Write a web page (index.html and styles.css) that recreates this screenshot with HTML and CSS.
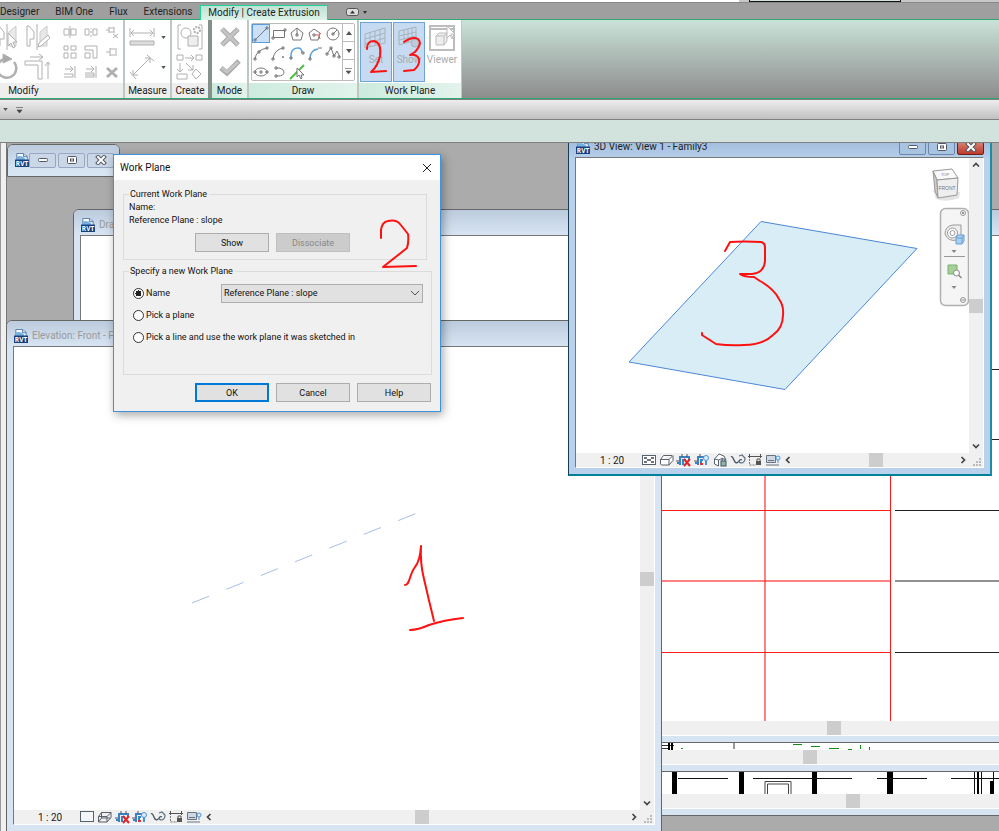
FILE: index.html
```html
<!DOCTYPE html>
<html lang="en">
<head>
<meta charset="utf-8">
<title>Modify | Create Extrusion</title>
<link rel="stylesheet" href="styles.css">
</head>
<body>
<svg class="defs" aria-hidden="true">
  <defs>
    <symbol id="rvt" viewBox="0 0 15 15"><path d="M2 .5h7l4 3V8H2z" fill="#fff" stroke="#4f78ad"/><path d="M9 .5V4h4" fill="#c7daf0" stroke="#4f78ad"/><path d="M2 4q4-2 9 2v3H2z" fill="#74b0e2"/><rect y="7" width="15" height="8" fill="#16417c"/><text x="7.500" y="13.500" text-anchor="middle" font-family="Open Sans, sans-serif" font-size="7" font-weight="700" fill="#fff">RVT</text></symbol>
    <symbol id="min" viewBox="0 0 12 10"><rect x="1.500" y="3.500" width="9" height="3" rx="1" fill="#fff" stroke="#505866"/></symbol>
    <symbol id="max" viewBox="0 0 12 10"><rect x="1.500" y="1.500" width="9" height="7" rx="1" fill="#fff" stroke="#505866"/><rect x="4.500" y="4" width="3" height="2" fill="#fff" stroke="#505866"/></symbol>
    <symbol id="cls" viewBox="0 0 12 10"><path d="M3 2l6 6M9 2L3 8" stroke="#505866" stroke-width="4" stroke-linecap="square"/><path d="M3 2l6 6M9 2L3 8" stroke="#fff" stroke-width="2" stroke-linecap="square"/></symbol>
    <symbol id="up" viewBox="0 0 8 8"><path d="M1 5.500L4 2.500l3 3" fill="none" stroke="#444" stroke-width="1.700"/></symbol>
    <symbol id="down" viewBox="0 0 8 8"><path d="M1 2.500l3 3 3-3" fill="none" stroke="#444" stroke-width="1.700"/></symbol>
    <symbol id="left" viewBox="0 0 8 8"><path d="M5.500 1l-3 3 3 3" fill="none" stroke="#444" stroke-width="1.700"/></symbol>
    <symbol id="right" viewBox="0 0 8 8"><path d="M2.500 1l3 3-3 3" fill="none" stroke="#444" stroke-width="1.700"/></symbol>
    <symbol id="grip" viewBox="0 0 8 8"><path d="M6 0h2v2H6zM3 3h2v2H3zM6 3h2v2H6zM0 6h2v2H0zM3 6h2v2H3zM6 6h2v2H6z" fill="#bbb"/></symbol>
    <symbol id="tri" viewBox="0 0 6 4"><path d="M0 0h6L3 4z" fill="#555"/></symbol>
    <symbol id="triup" viewBox="0 0 6 4"><path d="M0 4h6L3 0z" fill="#555"/></symbol>
    <symbol id="detail" viewBox="0 0 16 14"><rect x="1.500" y="2.500" width="13" height="9" fill="#fff" stroke="#59616b"/><path d="M3 4h3v2H3zM10 4h3v2h-3zM6 6h4v2H6zM3 8h3v2H3zM10 8h3v2h-3z" fill="#6d7680"/></symbol>
    <symbol id="sheet" viewBox="0 0 16 14"><rect x="1.500" y="1.500" width="13" height="10" fill="#f3f6fb" stroke="#59616b"/></symbol>
    <symbol id="box" viewBox="0 0 16 14"><path d="M1.500 6.500l3-4h8.500l1 1v4l-4 4.500H2.500l-1-1zM1.500 6.500H10l4-4M10 6.500V12" fill="#fff" stroke="#59616b" stroke-linejoin="round"/></symbol>
    <symbol id="boxw" viewBox="0 0 16 14"><path d="M1.500 6.500l3-4h9.500v5L10 12H1.500zM1.500 6.500H10l4-4M10 6.500V12M4.500 2.500V8h9M4.500 8l-3 4" fill="none" stroke="#59616b" stroke-linejoin="round"/></symbol>
    <symbol id="sunx" viewBox="0 0 16 14"><path d="M1 10h4M4 12V4h9v3M7 12V7h3" fill="none" stroke="#3b82c4" stroke-width="2"/><path d="M0 8h3M6 1v3M11 1v3" stroke="#555"/><path d="M8 6l6 7M14 6l-6 7" stroke="#dd2727" stroke-width="2"/></symbol>
    <symbol id="suno" viewBox="0 0 16 14"><path d="M1 10h4M4 12V4h6M7 12V7h2" fill="none" stroke="#3b82c4" stroke-width="2"/><path d="M0 8h3M6 1v3" stroke="#555"/><path d="M6 11h3" stroke="#d33" stroke-width="2"/><circle cx="12" cy="5" r="2.500" fill="#def" stroke="#4c91d6"/><path d="M12 8v4" stroke="#4c91d6" stroke-width="2"/></symbol>
    <symbol id="lock3d" viewBox="0 0 16 14"><path d="M2.500 6L7 1l5 2 2 4M2.500 6v5l4 2V7zM6.500 7L11 5" fill="#fff" stroke="#59616b"/><rect x="9" y="8" width="5" height="5" fill="#8fb6a4" stroke="#456"/><path d="M10 8V6h3v2" fill="none" stroke="#456"/></symbol>
    <symbol id="glasses" viewBox="0 0 16 14"><path d="M1 4q1-1 2 1l2 4q2 2 4-1 1-2 3-1" fill="none" stroke="#44505c" stroke-width="1.300"/><path d="M9 3l3-1 3 3q0 4-3 5-3 0-3-2" fill="none" stroke="#5c7386" stroke-width="1.200"/></symbol>
    <symbol id="crop" viewBox="0 0 16 14"><path d="M1 3.500h14M2.500 1v4M13.500 1v4" stroke="#555"/><path d="M2.500 6v6H9" fill="none" stroke="#777" stroke-dasharray="2 1"/><rect x="9" y="8" width="5" height="4" fill="#555"/><path d="M10 8V6h3v2" fill="none" stroke="#555"/></symbol>
    <symbol id="panel" viewBox="0 0 16 14"><path d="M1.500 2.500h9v7h-9z" fill="#cfd8e2" stroke="#667482"/><path d="M1 12h13M3 7.500h6" stroke="#667482"/><circle cx="13" cy="5" r="2" fill="#dff0ff" stroke="#4c91d6"/><path d="M13 7v3" stroke="#4c91d6"/></symbol>
  </defs>
</svg>

<div class="titlebar"><span class="searchbox"></span></div>

<nav class="tabs">
  <a class="tab first" href="#">Designer</a>
  <a class="tab" href="#">BIM One</a>
  <a class="tab" href="#">Flux</a>
  <a class="tab" href="#">Extensions</a>
  <a class="tab active" href="#">Modify | Create Extrusion</a>
  <button class="collapse" aria-label="Minimize ribbon"><svg width="22" height="10" viewBox="0 0 22 10"><rect x=".5" y="1.500" width="12" height="7" rx="2" fill="#ddd" stroke="#555"/><path d="M4 6.500L6.500 3.500 9 6.500zM17 4h4l-2 3z" fill="#333"/></svg></button>
</nav>

<header class="ribbon">
  <section class="panel modify">
    <div class="body">
      <div class="big">
        <button aria-label="Mirror, pick axis"><svg width="26" height="28" viewBox="0 0 26 28" class="ln"><path d="M3 3v20h3v-7h4V9L5 3zM13 1v26" /><path d="M15 9l7-6v20h-7z" fill="#e8e8e8" stroke="#ccc"/><path d="M14 10v13l3-3 2 5 2-1-2-5h4z" fill="#fff"/></svg></button>
        <button aria-label="Mirror, draw axis"><svg width="26" height="28" viewBox="0 0 26 28" class="ln"><path d="M3 3v20h3v-7h4V9L5 3zM13 1v26"/><path d="M16 9l7-6v20h-7z" fill="#e8e8e8" stroke="#ccc"/><path d="M14 24l1-4 9-8 2 3-9 8z" fill="#fff"/></svg></button>
        <button aria-label="Rotate"><svg width="26" height="28" viewBox="0 0 26 28" class="ln"><path d="M9 6.500A9.500 9.500 0 1 0 20 9" stroke-width="2.500"/><path d="M9 1l9 5-9 4z" fill="#aaa"/></svg></button>
        <button aria-label="Trim"><svg width="26" height="28" viewBox="0 0 26 28" class="ln"><path d="M1 8h17v18h-4V12H1zM6 4h12M15 1l4 3-4 3M24 26V10M21 13l3-4 3 4"/></svg></button>
      </div>
      <div class="small">
        <button aria-label="Align"><svg width="14" height="14" class="ln"><path d="M1 4h5v6H1zM8 4h5v6H8zM7 1v12"/></svg></button>
        <button aria-label="Split"><svg width="14" height="14" class="ln"><path d="M1 4h4v6H1zM9 4h4v6H9zM7 3v1M7 6v2M7 10v2"/></svg></button>
        <button aria-label="Unpin"><svg width="14" height="14" class="ln"><path d="M1 5h3M4 2v6M4 3h5M4 7h5M9 2v6M8 9l5 4M13 9l-5 4"/></svg></button>
        <button aria-label="Array"><svg width="14" height="14" class="ln"><path d="M1 1h4v4H1zM8 1h5v4H8zM1 8h4v5H1zM8 8h5v5H8z"/></svg></button>
        <button aria-label="Scale"><svg width="14" height="14" class="ln"><path d="M1 1h12v12H9V5H1zM1 8h5v5H1z"/></svg></button>
        <button aria-label="Pin"><svg width="14" height="14" class="ln"><path d="M1 7h4M5 3v8M5 4h5M5 10h5M11 3v8"/></svg></button>
        <button aria-label="Offset"><svg width="14" height="14" class="ln"><path d="M2 4h7M7 1l3 3-3 3M1 9h9v3H1M12 1v12"/></svg></button>
        <button aria-label="Trim multiple"><svg width="14" height="14" class="ln"><path d="M2 4h7M7 1l3 3-3 3M1 8h9v4H1M1 10h9M12 1v12"/></svg></button>
        <button aria-label="Delete"><svg width="14" height="14" class="ln"><path d="M2 3l10 9M12 3L2 12" stroke-width="3"/></svg></button>
      </div>
    </div>
    <h2>Modify</h2>
  </section>
  <section class="panel measure">
    <div class="body stack">
      <button aria-label="Measure"><svg width="26" height="20" viewBox="0 0 26 20" class="ln"><path d="M2 6h22M5 3L2 6l3 3M21 3l3 3-3 3M1 1v9M25 1v9"/><path d="M1 14h24v4H1z" fill="#ddd"/></svg><svg width="5" height="3"><use href="#tri"/></svg></button>
      <button aria-label="Dimension"><svg width="26" height="26" viewBox="0 0 26 26" class="ln"><path d="M4 21L21 4M4 16v5h5M16 4h5v5M1 18l6 7M18 1l7 6"/></svg><svg width="5" height="3"><use href="#tri"/></svg></button>
    </div>
    <h2>Measure</h2>
  </section>
  <section class="panel create">
    <div class="body stack">
      <button aria-label="Create group"><svg width="28" height="26" viewBox="0 0 28 26" class="ln"><path d="M5 1H2v24h3M23 1h3v24h-3"/><circle cx="10" cy="9" r="5"/><path d="M12 12h10v10H12z" fill="#eee"/><circle cx="21" cy="6" r="3" stroke-width="2" stroke-dasharray="2 1"/></svg></button>
      <button aria-label="Create similar"><svg width="28" height="26" viewBox="0 0 28 26" class="ln"><path d="M1 1h6v5H1zM20 1h6v5h-6zM9 4h8M15 1l3 3-3 3M4 9v8M1 15l3 3 3-3M10 9l7 7M17 11v5h-5M1 20h10v5H1zM20 15l5 5-5 5-4-5z"/></svg></button>
    </div>
    <h2>Create</h2>
  </section>
  <section class="panel context mode">
    <div class="body stack">
      <button aria-label="Cancel edit"><svg width="22" height="22" viewBox="0 0 22 22"><path d="M3 3l16 16M19 3L3 19" stroke="#aaa" stroke-width="5"/><path d="M3 3l16 16M19 3L3 19" stroke="#c4c4c4" stroke-width="3"/></svg></button>
      <button aria-label="Finish edit"><svg width="22" height="22" viewBox="0 0 22 22"><path d="M2 12l6 5L20 5" fill="none" stroke="#aaa" stroke-width="5"/><path d="M3 12l5 4L19 6" fill="none" stroke="#c4c4c4" stroke-width="3"/></svg></button>
    </div>
    <h2>Mode</h2>
  </section>
  <section class="panel context draw">
    <div class="body">
      <div class="gallery">
        <div class="shapes">
          <button class="on" aria-label="Line"><svg width="16" height="16" class="dk"><path d="M2 14L14 2M1 13h2v2H1zM13 1h2v2h-2z"/></svg></button>
          <button aria-label="Rectangle"><svg width="16" height="16" class="dk"><path d="M2.500 4.500h11v7h-11zM1 11h2v2H1zM13 3h2v2h-2z"/></svg></button>
          <button aria-label="Inscribed polygon"><svg width="16" height="16" class="dk"><path d="M8 2l6 5-2 7H4L2 7zM8 2v7M7 8h2v2H7z"/></svg></button>
          <button aria-label="Circumscribed polygon"><svg width="16" height="16" class="dk"><path d="M7 3l6 4-2 7H4L2 7zM6 8h2v2H6z"/><path d="M8 9h4l2-2M12 10l1 3" stroke="#d55"/></svg></button>
          <button aria-label="Circle"><svg width="16" height="16" class="dk"><circle cx="8" cy="8" r="6"/><path d="M8 8l4-4M7 7h2v2H7z"/></svg></button>
          <button aria-label="Start-end-radius arc"><svg width="16" height="16" class="dk"><path d="M2 14q1-9 12-11M1 13h2v2H1zM13 2h2v2h-2zM5 6h2v2H5z"/></svg></button>
          <button aria-label="Center-ends arc"><svg width="16" height="16" class="dk"><path d="M2 14q1-9 10-11M1 13h2v2H1zM11 2h2v2h-2zM12 11v2M11 12h2"/></svg></button>
          <button aria-label="Tangent end arc"><svg width="16" height="16" class="dk"><path d="M2 14V9q1-6 7-6 4 0 4 5" stroke="#5ba0da" stroke-width="1.500"/><path d="M1 12h2v2H1zM13 7h2v2h-2z"/></svg></button>
          <button aria-label="Fillet arc"><svg width="16" height="16" class="dk"><path d="M3 14q0-9 8-10" stroke="#5ba0da" stroke-width="1.500"/><path d="M2 13h2v2H2zM11 3h4"/></svg></button>
          <button aria-label="Spline"><svg width="16" height="16" class="dk"><path d="M2 9l4-6 3 8 3-5 3 6M1 8h2v2H1zM5 2h2v2H5zM8 10h2v2H8zM13 11h2v2h-2z"/></svg></button>
          <button aria-label="Ellipse"><svg width="16" height="16" class="dk"><ellipse cx="8" cy="8" rx="6" ry="4"/><path d="M7 7h2v2H7zM1 7h2v2H1zM13 7h2v2h-2z"/></svg></button>
          <button aria-label="Partial ellipse"><svg width="16" height="16" class="dk"><path d="M5 4h3q5 1 5 4 0 4-6 4H5M4 3h2v2H4zM4 11h2v2H4z"/></svg></button>
          <button aria-label="Pick lines"><svg width="16" height="16" class="dk"><path d="M1 15L15 1" stroke="#4cc040" stroke-width="2"/><path d="M8 4v9l2-2 2 4 1-1-1-3h3z" fill="#fff"/></svg></button>
        </div>
        <div class="spinner">
          <button aria-label="Scroll up"><svg width="6" height="4"><use href="#triup"/></svg></button>
          <button aria-label="Scroll down"><svg width="6" height="4"><use href="#tri"/></svg></button>
          <button aria-label="More shapes"><svg width="7" height="7"><path d="M0 1.500h7M1 4h5L3.500 7z" fill="#555" stroke="#555" stroke-width=".6"/></svg></button>
        </div>
      </div>
    </div>
    <h2>Draw</h2>
  </section>
  <section class="panel context plane">
    <div class="body">
      <button class="large on"><svg width="26" height="26" viewBox="0 0 26 26" class="gr"><path d="M2 9l20-6v15L2 23zM2 14l20-6M2 19l20-6M7 7v15M12 6v15M17 4v15"/></svg><span>Set</span></button>
      <button class="large on"><svg width="26" height="26" viewBox="0 0 26 26" class="gr"><path d="M3 6l17-4v13L3 20zM3 11l17-4M3 15l17-4M8 5v14M12 4v14M16 3v13"/><circle cx="19" cy="18" r="4" fill="#bccbd9"/></svg><span>Show</span></button>
      <button class="large"><svg width="26" height="26" viewBox="0 0 26 26" class="gr lt"><path d="M1 1h24v24H1zM1 4h24" stroke-width="2"/><path d="M7 11l3-3h8v8l-3 4H7zM7 11h8v9M15 11l3-3" fill="#eee"/><path d="M18 1v12l3-3 2 4 1-1-2-4h4z" fill="#fff"/></svg><span>Viewer</span></button>
      <svg class="ink" width="60" height="40" viewBox="364 35 60 40"><path d="M367 49c0-6 2-8 7-8q8 2 6 15-2 10-9 16l15-1"/><path d="M404 42q9-6 14-3 5 4-3 13l-5 3q7-1 9 4 1 6-5 11l-10 1"/></svg>
    </div>
    <h2>Work Plane</h2>
  </section>
</header>

<div class="quickbar">
  <svg width="5" height="3"><use href="#tri"/></svg>
  <svg width="7" height="7"><path d="M0 1.500h7M1 4h5L3.500 7z" fill="#444" stroke="#444" stroke-width=".6"/></svg>
</div>
<div class="options"></div>

<main class="work">
  <aside class="dock"></aside>
  <div class="desktop">

    <section class="win docked">
      <header><svg class="logo"><use href="#rvt"/></svg><div class="ctl"><button aria-label="Minimize"><svg><use href="#min"/></svg></button><button aria-label="Maximize"><svg><use href="#max"/></svg></button><button aria-label="Close"><svg><use href="#cls"/></svg></button></div></header>
    </section>

    <section class="win section-view">
      <header></header>
      <div class="view">
        <div class="canvas"><svg class="tail" width="340" height="50" viewBox="660 743 340 50"><g fill="#000"><path d="M672 771h5v22h-5zM739 771h5v22h-5zM812 771h5v22h-5zM887 771h6v22h-6zM977 771h2v22h-2zM990 780h4v13h-4z"/></g><path d="M678 777.500h50M753 777.500h99M877 777.500h50M951 777.500h49M974.500 771v22M981.500 771v22M993.500 771v10" stroke="#111"/><path d="M765 793v-12.500h26V793M767.500 793v-10h21v10" fill="none" stroke="#444"/></svg></div>
        <div class="hscroll plain"><i></i><b></b><i></i></div>
      </div>
    </section>

    <section class="win plan-view">
      <header></header>
      <div class="view">
        <div class="canvas"><svg class="tail" width="340" height="20" viewBox="660 730 340 20"><path d="M662 745.500h12M662 748.500h6M734 742v7" stroke="#333"/><path d="M668 743h2v7h-2zM671 743h2v7h-2z"/><path d="M681 748.500h2M793 744.500h9M811 746.500h9M829 748.500h10M848 749.500h4M860.500 745v4M869.500 747v3" stroke="#168a16"/></svg></div>
        <div class="hscroll plain"><i></i><b></b><i></i></div>
      </div>
    </section>

    <section class="win drawing-view">
      <header><svg class="logo"><use href="#rvt"/></svg><span>Dra</span></header>
      <div class="view">
        <div class="canvas"><svg width="1200" height="485" viewBox="81 236 1200 485"><g fill="#ff1a1a"><rect x="600" y="510" width="290" height="1"/><rect x="600" y="652" width="290" height="1"/><rect x="890" y="236" width="1" height="485"/><rect x="600" y="580" width="290" height="2" opacity=".55"/><rect x="764" y="236" width="2" height="485" opacity=".55"/></g><path d="M895 369.500h400M895 439.500h400M895 510.500h400M895 581h400M895 652.500h400" stroke="#222"/></svg></div>
        <div class="hscroll plain"><i></i><b></b><i></i></div>
      </div>
    </section>

    <section class="win elevation">
      <header><svg class="logo"><use href="#rvt"/></svg><span>Elevation: Front - F</span></header>
      <div class="view">
        <div class="canvas"><svg width="626" height="463" viewBox="14 347 626 463"><path d="M192 603L416 513.500" stroke="#a9bdea" stroke-dasharray="18.500 18.500"/><path class="redink" d="M405 585c5 0 4-10 10-18q5-6 6-21-1 17 3 33 5 22 10 42M410 630q8 0 19-5 15-5 34-7"/></svg></div>
        <div class="vscroll"><svg><use href="#up"/></svg><i></i><b></b><i></i><svg><use href="#down"/></svg></div>
        <footer>
          <span class="scale">1 : 20</span>
          <div class="icons"><svg><use href="#sheet"/></svg><svg><use href="#boxw"/></svg><svg><use href="#sunx"/></svg><svg><use href="#suno"/></svg><svg><use href="#glasses"/></svg><svg><use href="#crop"/></svg><svg><use href="#panel"/></svg></div>
          <div class="hscroll"><svg><use href="#left"/></svg><i></i><b></b><i></i><svg><use href="#right"/></svg></div>
          <svg class="grip"><use href="#grip"/></svg>
        </footer>
      </div>
    </section>

    <section class="win active three-d">
      <header><svg class="logo"><use href="#rvt"/></svg><span>3D View: View 1 - Family3</span><div class="ctl"><button aria-label="Minimize"><svg><use href="#min"/></svg></button><button aria-label="Maximize"><svg><use href="#max"/></svg></button><button class="close" aria-label="Close"><svg><use href="#cls"/></svg></button></div></header>
      <div class="view">
        <div class="canvas"><svg width="394" height="295" viewBox="576 158 394 295">
          <path d="M761 221.500L917 248.500 785 389.500 629 362z" fill="#d9edf6" stroke="#4a86d8"/>
          <path class="redink" d="M725 251l5-9q14-1 31 0 4 1 4 5v14q-1 12-13 13h-12q4 3 14 3l6 4q14 8 19 18 5 7 4 16 0 13-10 20-10 10-29 10-14 1-28-1l-14-9v-2"/>
          <path d="M933 190l3 9q10 4 23-1l1-6z" fill="#e4e4e4"/>
          <path d="M933 171l19-2 6 9-21 2z" fill="#fafafa" stroke="#999"/><path d="M933 171l4 9 1 18-3-7z" fill="#ccc" stroke="#999"/><path d="M937 180l21-2-1 17-19 3z" fill="#eee" stroke="#999"/>
          <text class="cube" x="945" y="176" font-size="4">TOP</text><text class="cube" x="947" y="190" font-size="5">FRONT</text>
          <rect x="940.500" y="208.500" width="28" height="97" rx="5" fill="#f5f5f5" stroke="#b0b0b0" stroke-width="1.500"/>
          <g fill="none" stroke="#999"><circle cx="963" cy="213" r="2.500"/><path d="M962 212l2 2M964 212l-2 2"/><circle cx="963" cy="300" r="2.500"/><path d="M961 300h4M944 256.500h21"/><path d="M953 225h8v10l-4 5q-9 2-12-6 0-8 8-9z" fill="#eee"/><circle cx="952.500" cy="233" r="5" fill="#fff"/><circle cx="952.500" cy="233" r="2.500"/></g>
          <path d="M956 237l2-2h6v6l-2 3h-6z" fill="#a9d0f3" stroke="#6b9fd0"/><path d="M956 238h6v6M962 238l2-3" fill="none" stroke="#6b9fd0"/>
          <path d="M951.500 250h5l-2.500 3zM951.500 286h5l-2.500 3z" fill="#888"/>
          <path d="M948 265h9v9h-9z" fill="#a7cf98" stroke="#79b06d"/><circle cx="956.500" cy="273" r="3" fill="#fff" stroke="#888"/><path d="M958.500 275l3 3" stroke="#888" stroke-width="1.500"/>
        </svg></div>
        <div class="vscroll"><svg><use href="#up"/></svg><i></i><b></b><i></i><svg><use href="#down"/></svg></div>
        <footer>
          <span class="scale">1 : 20</span>
          <div class="icons"><svg><use href="#detail"/></svg><svg><use href="#box"/></svg><svg><use href="#sunx"/></svg><svg><use href="#suno"/></svg><svg><use href="#lock3d"/></svg><svg><use href="#glasses"/></svg><svg><use href="#crop"/></svg><svg><use href="#panel"/></svg></div>
          <div class="hscroll"><svg><use href="#left"/></svg><i></i><b></b><i></i><svg><use href="#right"/></svg></div>
          <svg class="grip"><use href="#grip"/></svg>
        </footer>
      </div>
    </section>

    <form class="dialog" role="dialog" aria-labelledby="dlg-title">
      <div class="dlg-head"><h1 id="dlg-title">Work Plane</h1><button type="button" aria-label="Close"><svg width="10" height="10"><path d="M1 1l8 8M9 1L1 9" stroke="#222"/></svg></button></div>
      <div class="dlg-body">
        <fieldset class="current">
          <legend>Current Work Plane</legend>
          <p>Name:</p>
          <p>Reference Plane : slope</p>
          <div class="row"><button type="button">Show</button><button type="button" disabled>Dissociate</button></div>
        </fieldset>
        <fieldset class="specify">
          <legend>Specify a new Work Plane</legend>
          <div class="choice"><input type="radio" name="wp" id="wp-name" checked><label for="wp-name">Name</label>
            <span class="pick"><select aria-label="Work plane name"><option>Reference Plane : slope</option></select><svg width="8" height="5"><path d="M0 0l4 4 4-4" fill="none" stroke="#555"/></svg></span></div>
          <div class="choice"><input type="radio" name="wp" id="wp-plane"><label for="wp-plane">Pick a plane</label></div>
          <div class="choice"><input type="radio" name="wp" id="wp-line"><label for="wp-line">Pick a line and use the work plane it was sketched in</label></div>
        </fieldset>
        <div class="row actions"><button type="submit" class="default">OK</button><button type="button">Cancel</button><button type="button">Help</button></div>
      </div>
      <svg class="dlg-ink" width="50" height="60" viewBox="374 214 50 60"><path class="redink" d="M381 238v-8q1-8 7-9 8-2 12 3l8 10q1 7-1 14l-24 19 33-1"/></svg>
    </form>
  </div>
</main>
</body>
</html>
```
FILE: styles.css
```css
* { box-sizing: border-box; }
body {
  margin: 0;
  height: 100vh;
  overflow: hidden;
  display: flex;
  flex-direction: column;
  font: 10px/12px Roboto, "Open Sans", sans-serif;
  color: #222;
}
button { font: inherit; color: inherit; padding: 0; margin: 0; border: 0; background: none; }
svg { display: block; flex: none; }
h1, h2, p { margin: 0; font-size: inherit; font-weight: 400; }
.defs { position: absolute; width: 0; height: 0; }
.redink, .ink path { fill: none; stroke: #f11; stroke-width: 2; stroke-linecap: round; stroke-linejoin: round; }

/* application frame */
.titlebar {
  height: 3px;
  flex: none;
  display: flex;
  padding-left: 75%;
  background: linear-gradient(90deg, #fff 74%, #c8c8c8 74%);
  border-bottom: 1px solid #888;
}
.searchbox { width: 152px; border: 1px solid #111; border-top: 0; background: #d5dfdb; }

.tabs { height: 16px; flex: none; display: flex; align-items: stretch; background: #9f9f9f; }
.tab { padding: 3px 8px 0; color: #222; text-decoration: none; white-space: nowrap; }
.tab.first { padding-left: 0; }
.tab.active {
  height: 15px;
  margin: 2px 0 -1px;
  padding: 1px 7px 0;
  border: 1px solid #20d59b;
  border-bottom: 0;
  background: linear-gradient(#bfe2d5, #dcf3ea);
  z-index: 1;
}
.collapse { margin-left: 18px; padding-top: 2px; }

/* ribbon */
.ribbon {
  height: 80px;
  flex: none;
  display: flex;
  border: solid #2ea872;
  border-width: 1px 0;
  background: linear-gradient(#c9e3d8, #8c8c8c);
}
.panel { display: flex; flex-direction: column; flex: none; border-right: 2px solid #bfc7c3; background: #fff; }
.panel .body { flex: 1; display: flex; position: relative; min-height: 0; }
.panel h2 { height: 15px; line-height: 15px; text-align: center; background: #eee; }
.panel.context h2 { background: linear-gradient(90deg, #cdebdf, #e2f3ec); }
.modify { width: 125px; }
.modify h2 { padding-right: 76px; }
.measure { width: 47px; }
.create { width: 40px; border-right: 4px solid #84918b; }
.mode { width: 37px; }
.draw { width: 110px; }
.plane { width: 103px; border-right-width: 1px; }
.ln { fill: none; stroke: #b0b0b0; stroke-width: 1; }
.dk { fill: none; stroke: #777; stroke-width: 1; }
.gr { fill: none; stroke: #a8b2bb; stroke-width: 1; }
.lt { stroke: #bdbdbd; }
.modify .body { justify-content: space-between; overflow: hidden; }
.big { display: grid; grid-template: repeat(2, 30px) / repeat(2, 30px); margin-left: -6px; padding-top: 2px; }
.small { display: grid; grid-template: repeat(3, 20px) / repeat(3, 21px); padding: 2px 1px 0 0; }
.small button, .stack button { display: flex; align-items: center; justify-content: center; gap: 6px; }
.stack.body { flex-direction: column; padding-top: 2px; }
.stack button { height: 30px; }
.gallery { flex: 1; display: flex; margin: 3px 2px 2px; border: 1px solid #bbb; border-radius: 2px; }
.shapes { flex: 1; display: grid; grid-template-rows: repeat(3, 19px); grid-template-columns: repeat(5, 1fr); }
.shapes button { display: grid; place-items: center; }
.shapes .on { background: #c9e0f6; outline: 1px solid #5a9bd8; outline-offset: -1px; }
.spinner { width: 12px; display: grid; border-left: 1px solid #bbb; }
.spinner button { display: grid; place-items: center; }
.spinner button + button { border-top: 1px solid #bbb; }
.plane .body { padding: 2px 1px 1px; gap: 1px; }
.large { width: 32px; display: flex; flex-direction: column; align-items: center; padding-top: 3px; gap: 3px; color: #aaa; }
.large.on { background: #c6dbf1; border: 1px solid #6ea3d8; padding-top: 2px; }
.ink { position: absolute; left: 5px; top: 15px; }

.quickbar {
  height: 21px;
  flex: none;
  display: flex;
  align-items: center;
  gap: 8px;
  padding-left: 3px;
  border: solid #808080;
  border-width: 1px 0;
  background: linear-gradient(#eee, #c0c0c0);
}
.options { height: 23px; flex: none; background: #d1e3dc; border-bottom: 1px solid #808080; }

/* workspace */
.work { flex: 1; display: flex; min-height: 0; }
.dock { width: 6px; flex: none; background: #f0f0f0; border-left: 1px solid #999; }
.desktop { flex: 1; position: relative; overflow: hidden; background: #ababab; box-shadow: inset 1px 0 #777; }

.win {
  position: absolute;
  display: flex;
  flex-direction: column;
  padding: 0 6px 6px;
  border: 1px solid #666;
  border-radius: 6px 6px 0 0;
  background: #d7e4f2;
  color: #999;
}
.win > header {
  height: 25px;
  flex: none;
  display: flex;
  align-items: center;
  gap: 4px;
  margin: 0 -6px;
  padding: 5px 6px 0 7px;
  border-radius: 5px 5px 0 0;
  background: linear-gradient(#bccbdd, #d7e4f2);
  white-space: nowrap;
}
.logo { width: 14px; height: 14px; }
.ctl { display: flex; gap: 2px; margin-left: auto; }
.ctl button { width: 27px; height: 15px; display: grid; place-items: center; border: 1px solid #98a8c4; border-radius: 2px; background: #cbd7e6; }
.ctl svg { width: 12px; height: 10px; }

.view {
  flex: 1;
  min-height: 0;
  display: grid;
  grid-template: minmax(0, 1fr) 14px / minmax(0, 1fr) 14px;
  border: 1px solid #fff;
  border-top-color: #777;
  border-left-color: #777;
  background: #f0f0f0;
}
.canvas { overflow: hidden; background: #fff; }
.view footer { grid-column: 1 / -1; display: flex; color: #222; }
.scale { flex: none; width: 65px; padding-left: 24px; line-height: 15px; white-space: nowrap; }
.icons { display: flex; flex: none; justify-content: space-between; gap: 1px; }
.icons svg { width: 16px; height: 14px; }
.elevation .icons { width: 123px; }
.three-d .icons { width: 140px; }
.vscroll, .hscroll { display: flex; align-items: center; background: #f0f0f0; }
.vscroll { flex-direction: column; padding: 3px 0; }
.hscroll { flex: 1; padding-left: 3px; }
.hscroll svg, .vscroll svg { width: 8px; height: 8px; }
.hscroll i, .vscroll i { flex: 1; }
.hscroll b, .vscroll b { flex: none; width: 14px; height: 14px; background: #cdcdcd; }
.hscroll.plain { grid-column: 1 / -1; padding: 0; }
.grip { width: 8px; height: 8px; margin: 5px 2px 0 6px; }

.docked { left: 1px; top: 1px; width: 113px; height: 33px; }
.docked > header { gap: 0; padding: 5px 7px 0; }
.section-view, .plan-view, .drawing-view { left: 67px; }
.section-view { top: 300px; width: 1560px; height: 373px; }
.plan-view { top: 250px; width: 1473px; height: 379px; }
.section-view .canvas, .plan-view .canvas { grid-column: 1 / -1; display: flex; align-items: flex-end; }
.tail { margin-left: 579px; }
.drawing-view { top: 66px; width: 1522px; height: 534px; }
.drawing-view .canvas { grid-column: 1 / -1; }
.elevation { left: 0; top: 177px; bottom: -1px; width: 656px; }
.three-d { left: 562px; top: -12px; width: 424px; height: 345px; }
.active { background: #b9d1ea; border-color: #1a3c50; border-bottom: 2px solid #008099; border-right: 2px solid #1a8ea8; color: #222; }
.active > header { background: linear-gradient(#98b4d4, #b4cde9); }
.active .ctl button { background: #a9c3e2; border-color: #6d86a8; }
.active .ctl .close { background: linear-gradient(#d98a78, #c0392b); border-color: #6b2018; }
.cube { fill: #777; font-family: "Liberation Sans", sans-serif; text-anchor: middle; }

/* dialog */
.dialog {
  position: absolute;
  left: 107px;
  top: 11px;
  width: 328px;
  border: 1px solid #3f93dc;
  background: #f0f0f0;
  box-shadow: 2px 3px 9px rgba(0, 0, 0, .35);
  font-size: 9px;
  color: #111;
}
.dlg-head { height: 25px; display: flex; align-items: center; justify-content: space-between; padding: 0 8px 0 6px; background: #fff; font-size: 10px; }
.dlg-body { padding: 8px 8px 9px 9px; }
fieldset { margin: 0; padding: 1px 5px 0; border: 1px solid #dcdcdc; min-width: 0; }
legend { padding: 0 2px 0 1px; }
fieldset p { line-height: 13px; }
.current { height: 72px; margin-right: 5px; }
.specify { height: 110px; margin-top: 5px; }
.row { display: flex; gap: 7px; padding: 6px 0 0 66px; }
.row button, .pick select { height: 19px; border: 1px solid #adadad; background: #e1e1e1; }
.row button { width: 74px; }
.row button:disabled { background: #ccc; border-color: #bfbfbf; color: #888; }
.row .default { border: 2px solid #0078d7; }
.actions { padding: 8px 0 0 72px; }
.choice { height: 22px; display: flex; align-items: center; gap: 2px; padding-left: 4px; }
.specify legend + .choice { margin-top: 4px; }
.choice input { appearance: none; width: 11px; height: 11px; margin: 0; border: 1px solid #333; border-radius: 50%; background: #fff; }
.choice input:checked { background: radial-gradient(circle, #222 0 3px, #fff 3px); }
.pick { position: relative; width: 202px; margin-left: auto; margin-right: 3px; }
.pick select { display: block; width: 100%; padding: 0 2px; appearance: none; border-radius: 0; font: inherit; color: inherit; }
.pick svg { position: absolute; right: 4px; top: 7px; pointer-events: none; }
.dlg-ink { position: absolute; left: 260px; top: 59px; }
```
